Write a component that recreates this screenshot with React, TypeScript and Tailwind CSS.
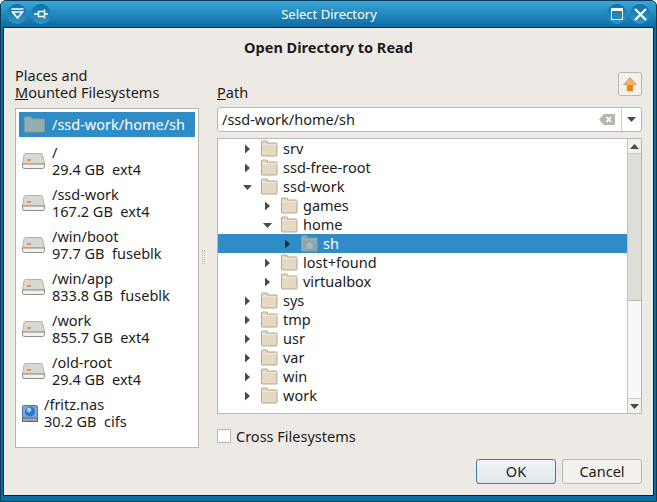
import React from "react";

const places = [
  { path: "/", info: "29.4 GB  ext4" },
  { path: "/ssd-work", info: "167.2 GB  ext4" },
  { path: "/win/boot", info: "97.7 GB  fuseblk" },
  { path: "/win/app", info: "833.8 GB  fuseblk" },
  { path: "/work", info: "855.7 GB  ext4" },
  { path: "/old-root", info: "29.4 GB  ext4" },
];

const tree = [
  { name: "srv", depth: 0, open: false },
  { name: "ssd-free-root", depth: 0, open: false },
  { name: "ssd-work", depth: 0, open: true },
  { name: "games", depth: 1, open: false },
  { name: "home", depth: 1, open: true },
  { name: "sh", depth: 2, open: false, selected: true },
  { name: "lost+found", depth: 1, open: false },
  { name: "virtualbox", depth: 1, open: false },
  { name: "sys", depth: 0, open: false },
  { name: "tmp", depth: 0, open: false },
  { name: "usr", depth: 0, open: false },
  { name: "var", depth: 0, open: false },
  { name: "win", depth: 0, open: false },
  { name: "work", depth: 0, open: false },
];

const FolderIcon = ({ selected }: { selected?: boolean }) => (
  <svg width="17" height="17" viewBox="0 0 17 17" className="shrink-0">
    <path
      d="M0.5 15 V2 a1 1 0 0 1 1-1 h4 a1 1 0 0 1 1 1 v1 h9 a.6 .6 0 0 1 .5 .5 v11.5 a1 1 0 0 1-1 1 h-14 a1 1 0 0 1-.5-1 z"
      fill={selected ? "#8fa9a9" : "#e6d9c3"}
      stroke={selected ? "#86a0a6" : "#b5a68e"}
    />
    <path d="M1 4.5 h15" stroke={selected ? "#9db2b2" : "#f1e8d8"} />
    {selected && (
      <path d="M8.5 6 L3 10.8 h1.8 v3.7 h7.4 v-3.7 h1.8 z" fill="#a4b9b9" stroke="#7d9aa0" strokeWidth="0.8" />
    )}
  </svg>
);

const DriveIcon = () => (
  <svg width="23" height="16" viewBox="0 0 23 16" className="shrink-0">
    <path d="M3.5 0.5 h15.5 a1.5 1.5 0 0 1 1.4 1 L22.5 11 H0.5 L2.1 1.5 a1.5 1.5 0 0 1 1.4-1 z" fill="#d9d7d3" stroke="#b4b2ad" />
    <path d="M0.5 11 h22 v2.5 a2 2 0 0 1-2 2 h-18 a2 2 0 0 1-2-2 z" fill="#f2f1ef" stroke="#8e8c87" />
    <rect x="5" y="6" width="4" height="2" fill="#e8954f" />
  </svg>
);

const NetworkIcon = () => (
  <svg width="16" height="17" viewBox="0 0 16 17" className="shrink-0">
    <rect x="0.5" y="0.5" width="15" height="13" rx="1.5" fill="#7ba8dc" stroke="#4d79ad" />
    <circle cx="8" cy="6.5" r="5" fill="#2f76c8" />
    <circle cx="7" cy="5" r="2.4" fill="#a9cdf0" />
    <rect x="0.5" y="13" width="15" height="3.5" fill="#9aa6b2" stroke="#5d6b78" />
  </svg>
);

const TreeArrow = ({ open, selected }: { open: boolean; selected?: boolean }) => (
  <svg width="9" height="10" viewBox="0 0 9 10" className="shrink-0">
    {open ? (
      <path d="M0 3 h9 L4.5 8 z" fill="#4a4a46" />
    ) : (
      <path d="M2 0.5 L7 5 L2 9.5 z" fill={selected ? "#1c2a33" : "#4a4a46"} />
    )}
  </svg>
);

const Caret = ({ up }: { up?: boolean }) => (
  <svg width="9" height="5" viewBox="0 0 9 5">
    <path d={up ? "M0 5 L4.5 0 L9 5 z" : "M0 0 h9 L4.5 5 z"} fill="#4a4a46" />
  </svg>
);

const TitleButton = ({ children }: { children: React.ReactNode }) => (
  <div className="w-[20px] h-[20px] rounded-full bg-gradient-to-b from-[#1271a8] to-[#2f95c6] flex items-center justify-center">
    {children}
  </div>
);

export default function App() {
  return (
    <div
      className="w-[657px] h-[502px] border border-[#0c3a55] bg-[#0a6ea6] rounded-t-[6px] flex flex-col text-[14.5px] leading-[17px] text-[#1c1c1a] overflow-hidden"
      style={{ fontFamily: '"Noto Sans", sans-serif' }}
    >
      {/* Title bar */}
      <div className="h-[26px] shrink-0 bg-gradient-to-b from-[#38a6d8] to-[#0b6ca4] flex items-center justify-between pl-[6px] pr-[6px]">
        <div className="flex gap-[4px]">
          <TitleButton>
            <svg width="13" height="12" viewBox="0 0 13 12">
              <path d="M0.5 1 h12" stroke="#fff" strokeWidth="1.6" />
              <path d="M1.5 4 h10 L6.5 10 z" fill="none" stroke="#fff" strokeWidth="1.6" />
            </svg>
          </TitleButton>
          <TitleButton>
            <svg width="15" height="10" viewBox="0 0 15 10">
              <path d="M0 5 h4 M4.5 2.5 h6 v5 h-6 z M10.5 0.5 v9 M11 5 h3" fill="none" stroke="#fff" strokeWidth="1.4" />
            </svg>
          </TitleButton>
        </div>
        <div className="text-white text-[13px]">Select Directory</div>
        <div className="flex gap-[3px]">
          <TitleButton>
            <svg width="12" height="12" viewBox="0 0 12 12">
              <path d="M0.5 0.5 h11 v11 h-11 z" fill="none" stroke="#fff" />
              <path d="M0.5 2 h11" stroke="#fff" strokeWidth="2" />
            </svg>
          </TitleButton>
          <TitleButton>
            <svg width="13" height="13" viewBox="0 0 13 13">
              <path d="M1 1 L12 12 M12 1 L1 12" stroke="#fff" strokeWidth="2.2" />
            </svg>
          </TitleButton>
        </div>
      </div>

      {/* Window body */}
      <div className="mx-[2px] h-[469px] shrink-0 border border-[#10212b] bg-[#edeae6] pl-[11px] pr-[11px] flex flex-col">
        <div className="text-center font-bold text-[14.5px] mt-[11px] h-[17px]">Open Directory to Read</div>

        <div className="flex mt-[11px] flex-1 min-h-0">
          {/* Places */}
          <div className="w-[184px] shrink-0 flex flex-col">
            <div className="h-[34px] mb-[7px]">
              Places and
              <br />
              <span className="underline">M</span>ounted Filesystems
            </div>
            <div className="h-[340px] border border-[#bab6b0] bg-white p-[3px]">
              <div className="h-[25px] mb-[3px] bg-[#308cc6] text-white flex items-center pl-[5px] gap-[7px]">
                <svg width="21" height="17" viewBox="0 0 21 17" className="shrink-0">
                  <path
                    d="M0.5 15 V2 a1 1 0 0 1 1-1 h5 a1 1 0 0 1 1 1 v1 h12 a1 1 0 0 1 1 1 v11 a1 1 0 0 1-1 1 h-18 a1 1 0 0 1-1-1 z"
                    fill="#96aeae"
                    stroke="#7f9aa2"
                  />
                </svg>
                <span>/ssd-work/home/sh</span>
              </div>
              {places.map((p) => (
                <div key={p.path} className="h-[42px] flex items-center pl-[3px] gap-[7px] whitespace-pre">
                  <DriveIcon />
                  <div>
                    {p.path}
                    <br />
                    {p.info}
                  </div>
                </div>
              ))}
              <div className="h-[42px] flex items-center pl-[3px] gap-[6px] whitespace-pre">
                <NetworkIcon />
                <div>
                  /fritz.nas
                  <br />
                  30.2 GB  cifs
                </div>
              </div>
            </div>
          </div>

          {/* Sash */}
          <div className="w-[18px] shrink-0 flex flex-col items-start pl-[3px] pt-[183px]">
            <div className="w-[3px] h-[14px] border-x border-dotted border-[#c4c0ba]" />
          </div>

          {/* Path and tree */}
          <div className="flex-1 min-w-0 flex flex-col">
            <div className="h-[40px] flex justify-between items-start">
              <div className="pt-[17px]">
                <span className="underline">P</span>ath
              </div>
              <div className="w-[24px] h-[24px] mt-[5px] rounded-[3px] border border-[#bab6b0] bg-[#f3f1ee] flex items-center justify-center">
                <svg width="14" height="15" viewBox="0 0 14 15">
                  <path d="M7 0.5 L13.5 7.5 H10 V14 H4 V7.5 H0.5 z" fill="#f3ae6e" stroke="#c98a4c" strokeWidth="0.6" />
                  <rect x="4.5" y="8" width="5" height="6" fill="#f08300" />
                </svg>
              </div>
            </div>

            <div className="h-[25px] rounded-[3px] border border-[#bab6b0] bg-white flex items-center">
              <div className="flex-1 pl-[4px]">/ssd-work/home/sh</div>
              <svg width="16" height="11" viewBox="0 0 16 11" className="mr-[6px]">
                <path d="M0 5.5 L5 0 H16 V11 H5 z" fill="#b8b5ae" />
                <path d="M7.5 3 L12 8 M12 3 L7.5 8" stroke="#fff" strokeWidth="1.8" />
              </svg>
              <div className="w-[20px] h-full border-l border-[#cfccc6] flex items-center justify-center">
                <Caret />
              </div>
            </div>

            <div className="h-[276px] mt-[6px] border border-[#bab6b0] bg-white flex">
              <div className="flex-1 min-w-0">
                {tree.map((t) => (
                  <div
                    key={t.name}
                    className={`h-[19px] flex items-center ${t.selected ? "bg-[#308cc6] text-white" : ""}`}
                  >
                    <div className={`flex items-center ${t.depth === 0 ? "pl-[25px]" : t.depth === 1 ? "pl-[45px]" : "pl-[65px]"}`}>
                      <TreeArrow open={t.open} selected={t.selected} />
                      <div className="ml-[9px] mr-[5px]">
                        <FolderIcon selected={t.selected} />
                      </div>
                      <span>{t.name}</span>
                    </div>
                  </div>
                ))}
              </div>
              <div className="w-[14px] shrink-0 border-l border-[#c4c1bb] bg-[#f9f8f6] flex flex-col">
                <div className="h-[15px] bg-[#f3f1ee] border-b border-[#cfccc6] flex items-center justify-center">
                  <Caret up />
                </div>
                <div className="h-[147px] bg-[#dfddd9] border-b border-[#bab6b0]" />
                <div className="flex-1" />
                <div className="h-[15px] bg-[#f3f1ee] border-t border-[#cfccc6] flex items-center justify-center">
                  <Caret />
                </div>
              </div>
            </div>

            <div className="flex items-center mt-[13px] h-[18px]">
              <div className="w-[14px] h-[14px] border border-[#bab6b0] bg-white" />
              <span className="ml-[5px]">Cross Filesystems</span>
            </div>

            <div className="flex justify-end gap-[6px] mt-[14px]">
              <div className="w-[80px] h-[25px] rounded-[3px] border border-[#3d7fa8] bg-gradient-to-b from-[#f2f6f8] to-[#dfe6ea] flex items-center justify-center">
                OK
              </div>
              <div className="w-[80px] h-[25px] rounded-[3px] border border-[#bab6b0] bg-[#f3f1ee] flex items-center justify-center">
                Cancel
              </div>
            </div>
          </div>
        </div>
      </div>
    </div>
  );
}
